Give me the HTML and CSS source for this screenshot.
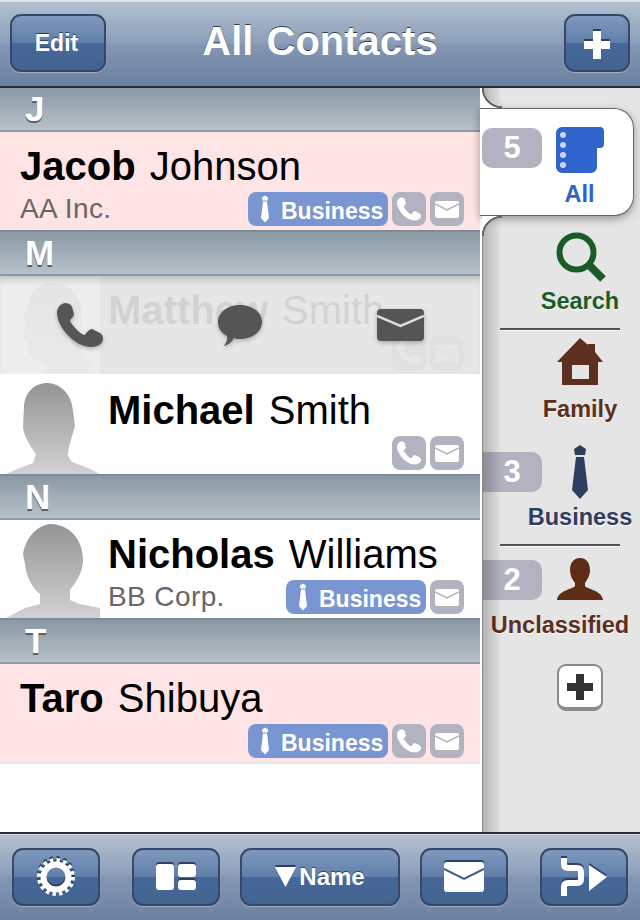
FILE: index.html
```html
<!DOCTYPE html>
<html>
<head>
  <meta charset="utf-8">
  <title>All Contacts</title>
  <link rel="stylesheet" href="styles.css">
</head>
<body>
<!-- icones reutilisees -->
<svg class="sprite" xmlns="http://www.w3.org/2000/svg">
  <defs><linearGradient id="silhouette" x1="0" y1="0" x2="0" y2="1"><stop offset="0" stop-color="#949494"/><stop offset="1" stop-color="#d2d2d2"/></linearGradient></defs>
  <symbol id="phone" viewBox="0 0 46 44"><path d="M8 0C11 0 14 1 15 4L17 11C17 14 13 16 13 18C14 21 23 31 27 32C29 32 31 26 35 26L43 30C45 31 46 33 46 36C46 41 40 44 34 44C18 44 0 24 0 10C0 5 3 1 8 0Z"/></symbol>
  <symbol id="tie" viewBox="20 4 20 56"><path d="M30 5L36 9L35 15H25L24 9Z"/><path d="M26 17H34L38 50L30 59L22 50Z"/></symbol>
  <symbol id="head1" viewBox="0 0 100 98"><path d="M47 7C60 7 72 18 73 35L75 50L72 60C70 68 68 72 68 80L72 86L88 92L100 98H6L20 92L33 87L36 78C30 70 25 62 23 52L24 30C25 16 35 7 47 7Z"/></symbol>
  <symbol id="head2" viewBox="0 0 100 98"><path d="M50 4C68 4 83 18 83 40C83 52 76 62 70 70V80L80 84L100 88V98H6L25 88L40 84V74C32 68 26 56 25 44L23 34C26 18 36 6 50 4Z"/></symbol>
  <symbol id="head3" viewBox="0 0 100 98"><path d="M52 7C68 7 80 18 81 32C82 48 78 62 80 72L90 85L96 98H42L44 88L36 84L30 80L28 68L23 62L26 50L23 42L28 30C28 18 38 7 52 7Z"/></symbol>
</svg>

<div class="app">
  <header class="navBar">
    <button class="barBtn editBtn">Edit</button>
    <h1 class="title">All Contacts</h1>
    <button class="barBtn addBtn">
      <svg width="26" height="28" viewBox="0 0 26 28"><path d="M9 0H17V10H26V18H17V28H9V18H0V10H9Z"/></svg>
    </button>
  </header>

  <main class="middle">
    <section class="list">
      <div class="letter">J</div>
      <div class="row pink">
        <div class="rowBody noPhoto">
          <div class="name"><b>Jacob</b> Johnson</div>
          <div class="rowFoot">
            <span class="company">AA Inc.</span>
            <span class="tags">
              <span class="tag bizTag"><svg class="tieSmall"><use href="#tie"/></svg>Business</span>
              <span class="tag"><svg class="phoneSmall"><use href="#phone"/></svg></span>
              <span class="tag"><svg class="mailSmall" viewBox="0 0 24 17"><rect width="24" height="17" rx="2"/><path d="M0 3L12 9L24 3"/></svg></span>
            </span>
          </div>
        </div>
      </div>

      <div class="letter">M</div>
      <div class="row pressed">
        <svg class="photo" fill="url(#silhouette)"><use href="#head3"/></svg>
        <div class="rowBody">
          <div class="name"><b>Matthew</b> Smith</div>
          <div class="rowFoot">
            <span class="company"></span>
            <span class="tags">
              <span class="tag"><svg class="phoneSmall"><use href="#phone"/></svg></span>
              <span class="tag"><svg class="mailSmall" viewBox="0 0 24 17"><rect width="24" height="17" rx="2"/><path d="M0 3L12 9L24 3"/></svg></span>
            </span>
          </div>
        </div>
        <div class="actions">
          <svg class="actPhone"><use href="#phone"/></svg>
          <svg class="actBubble" viewBox="0 0 44 41"><path d="M22 0C34 0 44 7 44 17C44 27 34 34 22 34C20 34 18 34 16 33C14 37 10 40 6 41C8 38 10 35 9 31C3 28 0 23 0 17C0 7 10 0 22 0Z"/></svg>
          <svg class="actMail" viewBox="0 0 47 32"><rect width="47" height="32" rx="4"/><path d="M0 7L23.500 17L47 7"/></svg>
        </div>
      </div>
      <div class="row">
        <svg class="photo" fill="url(#silhouette)"><use href="#head1"/></svg>
        <div class="rowBody">
          <div class="name"><b>Michael</b> Smith</div>
          <div class="rowFoot">
            <span class="company"></span>
            <span class="tags">
              <span class="tag"><svg class="phoneSmall"><use href="#phone"/></svg></span>
              <span class="tag"><svg class="mailSmall" viewBox="0 0 24 17"><rect width="24" height="17" rx="2"/><path d="M0 3L12 9L24 3"/></svg></span>
            </span>
          </div>
        </div>
      </div>

      <div class="letter">N</div>
      <div class="row">
        <svg class="photo" fill="url(#silhouette)"><use href="#head2"/></svg>
        <div class="rowBody">
          <div class="name"><b>Nicholas</b> Williams</div>
          <div class="rowFoot">
            <span class="company">BB Corp.</span>
            <span class="tags">
              <span class="tag bizTag"><svg class="tieSmall"><use href="#tie"/></svg>Business</span>
              <span class="tag"><svg class="mailSmall" viewBox="0 0 24 17"><rect width="24" height="17" rx="2"/><path d="M0 3L12 9L24 3"/></svg></span>
            </span>
          </div>
        </div>
      </div>

      <div class="letter">T</div>
      <div class="row pink lastRow">
        <div class="rowBody noPhoto">
          <div class="name"><b>Taro</b> Shibuya</div>
          <div class="rowFoot">
            <span class="company"></span>
            <span class="tags">
              <span class="tag bizTag"><svg class="tieSmall"><use href="#tie"/></svg>Business</span>
              <span class="tag"><svg class="phoneSmall"><use href="#phone"/></svg></span>
              <span class="tag"><svg class="mailSmall" viewBox="0 0 24 17"><rect width="24" height="17" rx="2"/><path d="M0 3L12 9L24 3"/></svg></span>
            </span>
          </div>
        </div>
      </div>
    </section>

    <aside class="side">
      <div class="cat current">
        <span class="count">5</span>
        <svg class="catIcon" viewBox="0 0 60 60">
          <path fill="#3163cd" d="M12 9H50A4 4 0 0 1 54 13V26A4 4 0 0 1 50 30H47V49A6 6 0 0 1 41 55H12A6 6 0 0 1 6 49V15A6 6 0 0 1 12 9Z"/>
          <g fill="#ccd4ea"><circle cx="13" cy="17" r="3"/><circle cx="13" cy="27" r="3"/><circle cx="13" cy="37" r="3"/><circle cx="13" cy="47" r="3"/></g>
        </svg>
        <span class="catName blue">All</span>
      </div>
      <div class="cat">
        <svg class="catIcon" viewBox="0 0 60 60">
          <circle cx="26.500" cy="28.500" r="17" fill="none" stroke="#1a5c28" stroke-width="6"/>
          <path d="M39 41L53 55" stroke="#1a5c28" stroke-width="8"/>
        </svg>
        <span class="catName green">Search</span>
      </div>
      <div class="cat">
        <div class="rule"></div>
        <svg class="catIcon" viewBox="0 0 60 60">
          <path fill="#5c2f20" d="M30 6L38 13V12H45V20L53 30H48V53H12V30H7Z"/>
          <rect x="22" y="33" width="17" height="14" fill="#e5e5e5"/>
        </svg>
        <span class="catName brown">Family</span>
      </div>
      <div class="cat">
        <span class="count">3</span>
        <svg class="catIcon navy" viewBox="0 0 60 60"><use href="#tie" x="20" y="4" width="20" height="56"/></svg>
        <span class="catName navyText">Business</span>
      </div>
      <div class="cat">
        <div class="rule"></div>
        <span class="count">2</span>
        <svg class="catIcon" viewBox="0 0 60 60">
          <path fill="#5c2d14" d="M30 10C37 10 40 16 40 22C40 28 37 32 35 35V38C36 41 52 42 53 52H7C8 42 24 41 25 38V35C23 32 20 28 20 22C20 16 23 10 30 10Z"/>
        </svg>
        <span class="catName brown wideName">Unclassified</span>
      </div>
      <button class="addCat">
        <svg width="26" height="26" viewBox="0 0 26 26"><path fill="#333" d="M9 0H17V9H26V17H17V26H9V17H0V9H9Z"/></svg>
      </button>
    </aside>
  </main>

  <footer class="toolBar">
    <button class="barBtn toolBtn spaced">
      <svg width="38" height="38" viewBox="0 0 38 38" fill="none" stroke="#fff">
        <circle cx="19" cy="19" r="17" stroke-width="4" stroke-dasharray="3.400 3.275"/>
        <circle cx="19" cy="19" r="12.500" stroke-width="6"/>
      </svg>
    </button>
    <button class="barBtn toolBtn">
      <svg width="40" height="26" viewBox="0 0 40 26" fill="#fff">
        <rect width="18" height="26" rx="3"/><rect x="22" width="18" height="13" rx="3"/><rect x="22" y="16" width="18" height="10" rx="3"/>
      </svg>
    </button>
    <button class="barBtn sortBtn">
      <svg width="21" height="20" viewBox="0 0 21 20"><path fill="#fff" d="M0 0H21L10.500 20Z"/></svg>
      <span>Name</span>
    </button>
    <button class="barBtn toolBtn spaced">
      <svg width="40" height="30" viewBox="0 0 40 30">
        <rect width="40" height="30" rx="3" fill="#fff"/><path d="M0 7L20 17L40 7" fill="none" stroke="#3b5a8a" stroke-width="2"/>
      </svg>
    </button>
    <button class="barBtn toolBtn">
      <svg width="48" height="38" viewBox="0 0 48 38">
        <path d="M4 0V6Q4 10 8 10H17Q21 10 21 14V21Q21 25 17 25H8Q4 25 4 29V38" fill="none" stroke="#fff" stroke-width="6"/>
        <path d="M29 7L47 19L29 33Z" fill="#fff"/>
      </svg>
    </button>
  </footer>
</div>
</body>
</html>
```
FILE: styles.css
```css
html, body {margin:0;padding:0;}
body {font-family:"Liberation Sans", Arial, sans-serif;background:#fff;}
button {font-family:inherit;padding:0;margin:0;}
.sprite {position:absolute;width:0;height:0;}
.app {width:640px;height:920px;display:flex;flex-direction:column;overflow:hidden;}

/* barres du haut et du bas */
.navBar, .toolBar {box-sizing:border-box;height:88px;background:linear-gradient(#b4c0d0 0%, #8a9cb7 50%, #8497b3 50%, #6b80a1 100%);}
.navBar {display:grid;grid-template-columns:1fr auto 1fr;align-items:start;padding:14px 10px 0;border-top:2px solid #dfe3e8;border-bottom:2px solid #2a2d33;}
.barBtn {display:flex;align-items:center;justify-content:center;box-sizing:border-box;height:58px;color:#fff;font-weight:bold;border:2px solid #35486a;border-radius:11px;background:linear-gradient(#7f98bd 0%, #5f7fa9 50%, #46689a 50%, #43648f 100%);box-shadow:0 1px 1px rgba(255,255,255,.35);}
.barBtn svg {filter:drop-shadow(0 -2px 0 #2f4060);}
.editBtn {width:96px;justify-self:start;margin-top:-2px;padding-right:3px;font-size:23px;text-shadow:0 -1px 0 #2f4060;}
.addBtn {width:66px;justify-self:end;margin-top:-2px;padding-top:3px;}
.addBtn path {fill:#fff;}
.title {margin:2px 0 0;font-size:40px;line-height:46px;color:#fff;word-spacing:2px;text-shadow:0 -1px 0 #333c4e;}
.toolBar {display:flex;align-items:flex-start;gap:20px;padding:14px 12px 0;border-top:2px solid #2a2d33;box-shadow:inset 0 1px 0 #d5dbe3;}
.toolBtn {width:88px;}
.toolBtn.spaced:first-child {margin-right:12px;}
.toolBtn.spaced:nth-child(4) {margin-right:12px;}
.sortBtn {width:160px;gap:3px;font-size:24px;}
.sortBtn span {text-shadow:0 -1px 0 #2f4060;}

.middle {flex:1;display:flex;min-height:0;}

/* liste des contacts */
.list {width:480px;flex:none;background:#fff;}
.letter {box-sizing:border-box;height:46px;padding-left:25px;font-size:35px;line-height:42px;font-weight:bold;color:#fff;text-shadow:0 2px 0 #566270;background:linear-gradient(#8b99a5, #b6c1c9);border-top:2px solid #7f8c98;border-bottom:2px solid #8d98a3;}
.letter:first-child {height:44px;border-top:0;}
.row {position:relative;display:flex;height:98px;background:#fff;}
.pink {background:#fee4e4;}
.lastRow, .pressed {height:100px;border-bottom:2px solid #e4e4e4;box-sizing:border-box;}
.pressed {border-bottom-color:#fff;}
.photo {width:100px;height:98px;flex:none;}
.rowBody {flex:1;min-width:0;display:flex;flex-direction:column;box-sizing:border-box;height:98px;padding:14px 16px 4px 8px;}
.noPhoto {padding-left:20px;}
.name {font-size:40px;line-height:40px;color:#000;white-space:nowrap;word-spacing:3px;}
.rowFoot {margin-top:auto;display:flex;justify-content:space-between;align-items:flex-end;}
.company {font-size:28px;line-height:28px;margin-bottom:3px;color:#666;letter-spacing:.4px;}
.tags {display:flex;gap:4px;}
.tag {display:flex;align-items:center;justify-content:center;width:34px;height:34px;border-radius:8px;background:#b2b2c0;}
.bizTag {box-sizing:border-box;width:140px;justify-content:flex-start;padding:4px 0 0 12px;gap:11px;font-size:23px;font-weight:bold;color:#fff;background:#7a96d2;}
.tieSmall {width:10px;height:28px;margin-top:-4px;fill:#fff;}
.phoneSmall {width:24px;height:26px;fill:#fff;}
.mailSmall {width:24px;height:17px;fill:#fff;}
.mailSmall path {fill:none;stroke:#b2b2c0;stroke-width:1.5;}

/* ligne appuyee : le voile passe au-dessus du contenu */
.actions {position:absolute;inset:0;display:grid;grid-template-columns:repeat(3, 160px);align-items:center;justify-items:center;background:linear-gradient(90deg, rgba(236,236,236,.92) 100px, rgba(228,228,228,.92) 100px);box-shadow:inset 0 8px 8px -6px rgba(0,0,0,.25);}
.actions svg {fill:#555;filter:drop-shadow(0 2px 2px rgba(0,0,0,.25));}
.actPhone {width:46px;height:44px;}
.actBubble {width:44px;height:41px;}
.actMail {width:47px;height:32px;}
.actMail path {fill:none;stroke:#ddd;stroke-width:2.500;}

/* colonne des categories */
.side {position:relative;width:160px;flex:none;box-sizing:border-box;padding-top:20px;background:#e5e5e5;}
.side::after {content:"";position:absolute;top:0;bottom:0;left:0;width:22px;background:linear-gradient(90deg, #fff 2px, #888 2px, #888 3px, rgba(0,0,0,.22) 3px, rgba(0,0,0,0) 100%);pointer-events:none;}
.cat {position:relative;box-sizing:border-box;height:108px;padding:0 0 9px 40px;display:flex;flex-direction:column;align-items:center;justify-content:flex-end;}
.current {z-index:1;width:154px;padding:0 0 7px 46px;background:#fff;border:solid #666;border-width:1px 1px 1px 0;border-radius:0 20px 20px 0;box-shadow:0 3px 8px rgba(0,0,0,.35);}
.current::before, .current::after {content:"";position:absolute;left:2px;width:20px;height:20px;}
.current::before {bottom:100%;margin-bottom:1px;background:radial-gradient(circle at 100% 0, rgba(102,102,102,0) 18px, #666 18.500px, #666 20px, #fff 20.500px);}
.current::after {top:100%;margin-top:1px;background:radial-gradient(circle at 100% 100%, rgba(102,102,102,0) 18px, #666 18.500px, #666 20px, #fff 20.500px);}
.catIcon {width:60px;height:60px;flex:none;}
.navy {fill:#2f3e5f;}
.catName {font-size:23.500px;line-height:28px;margin-top:3px;font-weight:bold;white-space:nowrap;text-shadow:0 1px 0 #fff;}
.current .catName {margin-top:2px;}
.wideName {margin-right:40px;}
.blue {color:#2f62cc;}
.green {color:#1a5c28;}
.brown {color:#5c2f20;}
.navyText {color:#2f3e5f;}
.count {position:absolute;left:2px;top:20px;width:60px;height:40px;border-radius:0 10px 10px 0;background:#b2b2c0;color:#fff;font-size:31px;line-height:40px;font-weight:bold;text-align:center;}
.current .count {top:19px;border-radius:10px;}
.rule {align-self:flex-start;flex:none;width:120px;height:2px;margin:4px 0 auto -20px;background:#555;border-bottom:1px solid #fff;}
.addCat {display:flex;align-items:center;justify-content:center;box-sizing:border-box;width:46px;height:47px;margin:16px 0 0 77px;background:#fff;border:2px solid #8a8a8a;border-bottom-width:4px;border-radius:9px;}
```
